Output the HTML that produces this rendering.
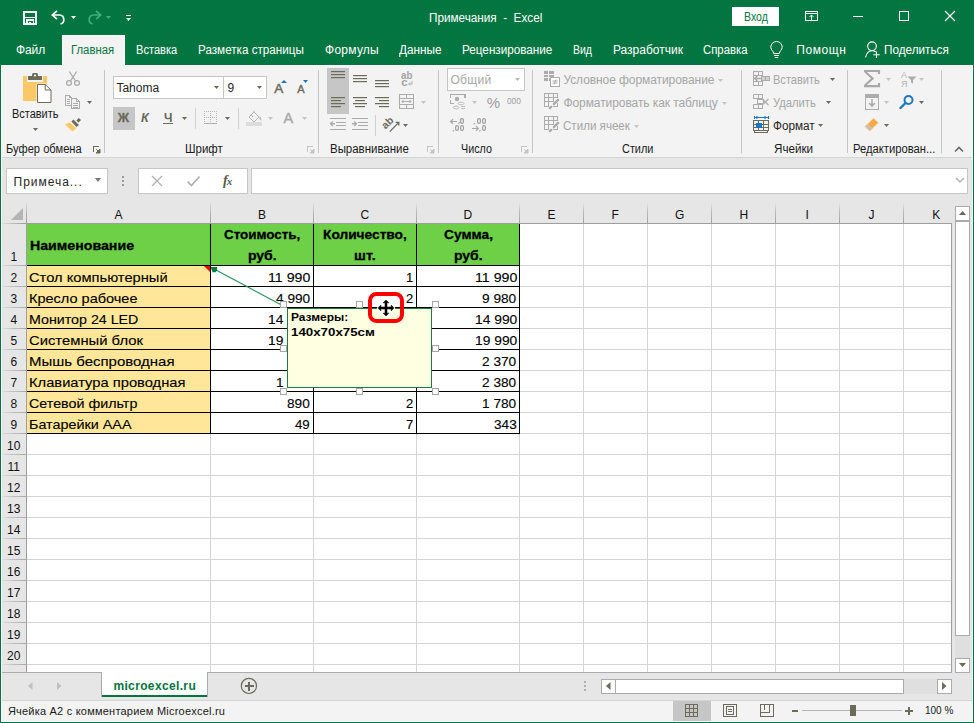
<!DOCTYPE html>
<html><head><meta charset="utf-8"><style>
html,body{margin:0;padding:0;}
body{width:974px;height:723px;overflow:hidden;position:relative;background:#fff;font-family:'Liberation Sans',sans-serif;}
.a{position:absolute;}
.t{position:absolute;white-space:pre;line-height:20px;}
svg{shape-rendering:crispEdges;}
svg .s{shape-rendering:geometricPrecision;}
</style></head><body>
<div class="a" style="left:0px;top:0px;width:974px;height:65px;background:#037541;"></div>
<div class="a" style="left:62px;top:35px;width:63px;height:30px;background:#f3f3f3;"></div>
<div class="a" style="left:62px;top:35px;width:1px;height:30px;background:#fdfbfd;"></div>
<div class="a" style="left:124px;top:35px;width:1px;height:30px;background:#fdfbfd;"></div>
<div class="a" style="left:62px;top:35px;width:63px;height:1px;background:#fdfbfd;"></div>
<div class="a" style="left:0px;top:65px;width:974px;height:92px;background:#f3f3f3;"></div>
<div class="a" style="left:0px;top:157px;width:974px;height:1px;background:#d4d4d4;"></div>
<div class="a" style="left:1px;top:65px;width:61px;height:1px;background:#fdfbfd;"></div>
<div class="a" style="left:125px;top:65px;width:848px;height:1px;background:#fdfbfd;"></div>
<div class="a" style="left:0px;top:158px;width:974px;height:66px;background:#e6e6e6;"></div>
<div class="a" style="left:0px;top:224px;width:27px;height:448px;background:#e6e6e6;"></div>
<div class="a" style="left:27px;top:224px;width:925px;height:448px;background:#ffffff;"></div>
<div class="a" style="left:952px;top:203px;width:20px;height:469px;background:#e6e6e6;"></div>
<div class="a" style="left:0px;top:672px;width:974px;height:28px;background:#e6e6e6;"></div>
<div class="a" style="left:0px;top:700px;width:974px;height:22px;background:#f3f3f3;"></div>
<div class="t" style="left:429.30px;top:8px;font-family:'Liberation Sans';font-size:12px;font-weight:normal;color:#fff;letter-spacing:0.000px;transform:scaleX(0.9767);transform-origin:0 0;">Примечания  -  Excel</div>
<div class="a" style="left:732px;top:7px;width:47px;height:19px;background:#fff;"></div>
<div class="t" style="left:743.50px;top:7px;font-family:'Liberation Sans';font-size:12px;font-weight:normal;color:#037541;letter-spacing:0.000px;transform:scaleX(0.8821);transform-origin:0 0;">Вход</div>
<div class="t" style="left:15.90px;top:40px;font-family:'Liberation Sans';font-size:12px;font-weight:normal;color:#fff;letter-spacing:-0.067px;">Файл</div>
<div class="t" style="left:71.10px;top:40px;font-family:'Liberation Sans';font-size:12px;font-weight:normal;color:#037541;letter-spacing:0.000px;transform:scaleX(0.9435);transform-origin:0 0;">Главная</div>
<div class="t" style="left:136.20px;top:40px;font-family:'Liberation Sans';font-size:12px;font-weight:normal;color:#fff;letter-spacing:0.000px;transform:scaleX(0.9244);transform-origin:0 0;">Вставка</div>
<div class="t" style="left:198.20px;top:40px;font-family:'Liberation Sans';font-size:12px;font-weight:normal;color:#fff;letter-spacing:0.000px;transform:scaleX(0.9725);transform-origin:0 0;">Разметка страницы</div>
<div class="t" style="left:325.10px;top:40px;font-family:'Liberation Sans';font-size:12px;font-weight:normal;color:#fff;letter-spacing:0.233px;">Формулы</div>
<div class="t" style="left:398.80px;top:40px;font-family:'Liberation Sans';font-size:12px;font-weight:normal;color:#fff;letter-spacing:0.000px;transform:scaleX(0.9818);transform-origin:0 0;">Данные</div>
<div class="t" style="left:462.30px;top:40px;font-family:'Liberation Sans';font-size:12px;font-weight:normal;color:#fff;letter-spacing:0.000px;transform:scaleX(0.9753);transform-origin:0 0;">Рецензирование</div>
<div class="t" style="left:573.30px;top:40px;font-family:'Liberation Sans';font-size:12px;font-weight:normal;color:#fff;letter-spacing:0.000px;transform:scaleX(0.8727);transform-origin:0 0;">Вид</div>
<div class="t" style="left:613.00px;top:40px;font-family:'Liberation Sans';font-size:12px;font-weight:normal;color:#fff;letter-spacing:-0.010px;">Разработчик</div>
<div class="t" style="left:703.10px;top:40px;font-family:'Liberation Sans';font-size:12px;font-weight:normal;color:#fff;letter-spacing:0.000px;transform:scaleX(0.9458);transform-origin:0 0;">Справка</div>
<div class="t" style="left:796.30px;top:40px;font-family:'Liberation Sans';font-size:12px;font-weight:normal;color:#fff;letter-spacing:0.580px;">Помощн</div>
<div class="t" style="left:884.30px;top:40px;font-family:'Liberation Sans';font-size:12px;font-weight:normal;color:#fff;letter-spacing:0.000px;transform:scaleX(0.9773);transform-origin:0 0;">Поделиться</div>
<div class="t" style="left:6.20px;top:139px;font-family:'Liberation Sans';font-size:12px;font-weight:normal;color:#1a1a1a;letter-spacing:0.000px;transform:scaleX(0.9280);transform-origin:0 0;">Буфер обмена</div>
<div class="t" style="left:184.70px;top:139px;font-family:'Liberation Sans';font-size:12px;font-weight:normal;color:#1a1a1a;letter-spacing:0.000px;transform:scaleX(0.9575);transform-origin:0 0;">Шрифт</div>
<div class="t" style="left:330.00px;top:139px;font-family:'Liberation Sans';font-size:12px;font-weight:normal;color:#1a1a1a;letter-spacing:0.000px;transform:scaleX(0.9542);transform-origin:0 0;">Выравнивание</div>
<div class="t" style="left:461.00px;top:139px;font-family:'Liberation Sans';font-size:12px;font-weight:normal;color:#1a1a1a;letter-spacing:0.000px;transform:scaleX(0.8943);transform-origin:0 0;">Число</div>
<div class="t" style="left:621.50px;top:139px;font-family:'Liberation Sans';font-size:12px;font-weight:normal;color:#1a1a1a;letter-spacing:0.000px;transform:scaleX(0.9088);transform-origin:0 0;">Стили</div>
<div class="t" style="left:774.40px;top:139px;font-family:'Liberation Sans';font-size:12px;font-weight:normal;color:#1a1a1a;letter-spacing:0.000px;transform:scaleX(0.9725);transform-origin:0 0;">Ячейки</div>
<div class="t" style="left:852.70px;top:139px;font-family:'Liberation Sans';font-size:12px;font-weight:normal;color:#1a1a1a;letter-spacing:0.000px;transform:scaleX(0.9352);transform-origin:0 0;">Редактирован...</div>
<div class="a" style="left:104px;top:70px;width:1px;height:83px;background:#c6c6c6;"></div>
<div class="a" style="left:318px;top:70px;width:1px;height:83px;background:#c6c6c6;"></div>
<div class="a" style="left:438px;top:70px;width:1px;height:83px;background:#c6c6c6;"></div>
<div class="a" style="left:532px;top:70px;width:1px;height:83px;background:#c6c6c6;"></div>
<div class="a" style="left:741px;top:70px;width:1px;height:83px;background:#c6c6c6;"></div>
<div class="a" style="left:847px;top:70px;width:1px;height:83px;background:#c6c6c6;"></div>
<div class="a" style="left:941px;top:70px;width:1px;height:83px;background:#c6c6c6;"></div>
<div class="a" style="left:6px;top:168px;width:102px;height:26px;background:#fff;box-sizing:border-box;border:1px solid #c6c6c6;"></div>
<div class="t" style="left:13.60px;top:172px;font-family:'Liberation Sans';font-size:12px;font-weight:normal;color:#262626;letter-spacing:0.967px;">Примеча...</div>
<div class="a" style="left:138px;top:168px;width:110px;height:26px;background:#fff;box-sizing:border-box;border:1px solid #c6c6c6;"></div>
<div class="a" style="left:251px;top:168px;width:717px;height:26px;background:#fff;box-sizing:border-box;border:1px solid #c6c6c6;"></div>
<div class="t" style="left:114.50px;top:205px;font-family:'Liberation Sans';font-size:12px;font-weight:normal;color:#111;letter-spacing:0.000px;">A</div>
<div class="t" style="left:258.00px;top:205px;font-family:'Liberation Sans';font-size:12px;font-weight:normal;color:#111;letter-spacing:0.000px;">B</div>
<div class="t" style="left:360.50px;top:205px;font-family:'Liberation Sans';font-size:12px;font-weight:normal;color:#111;letter-spacing:0.000px;">C</div>
<div class="t" style="left:463.50px;top:205px;font-family:'Liberation Sans';font-size:12px;font-weight:normal;color:#111;letter-spacing:0.000px;">D</div>
<div class="t" style="left:547.50px;top:205px;font-family:'Liberation Sans';font-size:12px;font-weight:normal;color:#111;letter-spacing:0.000px;">E</div>
<div class="t" style="left:611.50px;top:205px;font-family:'Liberation Sans';font-size:12px;font-weight:normal;color:#111;letter-spacing:0.000px;">F</div>
<div class="t" style="left:675.00px;top:205px;font-family:'Liberation Sans';font-size:12px;font-weight:normal;color:#111;letter-spacing:0.000px;">G</div>
<div class="t" style="left:739.50px;top:205px;font-family:'Liberation Sans';font-size:12px;font-weight:normal;color:#111;letter-spacing:0.000px;">H</div>
<div class="t" style="left:805.50px;top:205px;font-family:'Liberation Sans';font-size:12px;font-weight:normal;color:#111;letter-spacing:0.000px;">I</div>
<div class="t" style="left:868.50px;top:205px;font-family:'Liberation Sans';font-size:12px;font-weight:normal;color:#111;letter-spacing:0.000px;">J</div>
<div class="t" style="left:932.30px;top:205px;font-family:'Liberation Sans';font-size:12px;font-weight:normal;color:#111;letter-spacing:0.000px;">K</div>
<div class="a" style="left:210px;top:203px;width:1px;height:20px;background:linear-gradient(to bottom,#e2e2e2,#b8b8b8 45%,#a4a4a4);"></div>
<div class="a" style="left:313px;top:203px;width:1px;height:20px;background:linear-gradient(to bottom,#e2e2e2,#b8b8b8 45%,#a4a4a4);"></div>
<div class="a" style="left:416px;top:203px;width:1px;height:20px;background:linear-gradient(to bottom,#e2e2e2,#b8b8b8 45%,#a4a4a4);"></div>
<div class="a" style="left:519px;top:203px;width:1px;height:20px;background:linear-gradient(to bottom,#e2e2e2,#b8b8b8 45%,#a4a4a4);"></div>
<div class="a" style="left:583px;top:203px;width:1px;height:20px;background:linear-gradient(to bottom,#e2e2e2,#b8b8b8 45%,#a4a4a4);"></div>
<div class="a" style="left:647px;top:203px;width:1px;height:20px;background:linear-gradient(to bottom,#e2e2e2,#b8b8b8 45%,#a4a4a4);"></div>
<div class="a" style="left:711px;top:203px;width:1px;height:20px;background:linear-gradient(to bottom,#e2e2e2,#b8b8b8 45%,#a4a4a4);"></div>
<div class="a" style="left:775px;top:203px;width:1px;height:20px;background:linear-gradient(to bottom,#e2e2e2,#b8b8b8 45%,#a4a4a4);"></div>
<div class="a" style="left:839px;top:203px;width:1px;height:20px;background:linear-gradient(to bottom,#e2e2e2,#b8b8b8 45%,#a4a4a4);"></div>
<div class="a" style="left:903px;top:203px;width:1px;height:20px;background:linear-gradient(to bottom,#e2e2e2,#b8b8b8 45%,#a4a4a4);"></div>
<div class="a" style="left:26px;top:203px;width:1px;height:20px;background:linear-gradient(to bottom,#e2e2e2,#b8b8b8 45%,#9a9a9a);"></div>
<div class="a" style="left:27px;top:223px;width:925px;height:1px;background:#9e9e9e;"></div>
<div class="a" style="left:1px;top:223px;width:26px;height:1px;background:linear-gradient(to right,#e2e2e2,#c0c0c0 40%,#9a9a9a);"></div>
<div class="a" style="left:26px;top:223px;width:1px;height:449px;background:#9e9e9e;"></div>
<div class="t" style="left:10.50px;top:247px;font-family:'Liberation Sans';font-size:12px;font-weight:normal;color:#111;letter-spacing:0.000px;">1</div>
<div class="a" style="left:1px;top:265px;width:25px;height:1px;background:linear-gradient(to right,#e2e2e2,#c4c4c4 40%,#a8a8a8);"></div>
<div class="t" style="left:10.50px;top:268px;font-family:'Liberation Sans';font-size:12px;font-weight:normal;color:#111;letter-spacing:0.000px;">2</div>
<div class="a" style="left:1px;top:286px;width:25px;height:1px;background:linear-gradient(to right,#e2e2e2,#c4c4c4 40%,#a8a8a8);"></div>
<div class="t" style="left:10.50px;top:289px;font-family:'Liberation Sans';font-size:12px;font-weight:normal;color:#111;letter-spacing:0.000px;">3</div>
<div class="a" style="left:1px;top:307px;width:25px;height:1px;background:linear-gradient(to right,#e2e2e2,#c4c4c4 40%,#a8a8a8);"></div>
<div class="t" style="left:10.50px;top:310px;font-family:'Liberation Sans';font-size:12px;font-weight:normal;color:#111;letter-spacing:0.000px;">4</div>
<div class="a" style="left:1px;top:328px;width:25px;height:1px;background:linear-gradient(to right,#e2e2e2,#c4c4c4 40%,#a8a8a8);"></div>
<div class="t" style="left:10.50px;top:331px;font-family:'Liberation Sans';font-size:12px;font-weight:normal;color:#111;letter-spacing:0.000px;">5</div>
<div class="a" style="left:1px;top:349px;width:25px;height:1px;background:linear-gradient(to right,#e2e2e2,#c4c4c4 40%,#a8a8a8);"></div>
<div class="t" style="left:10.50px;top:352px;font-family:'Liberation Sans';font-size:12px;font-weight:normal;color:#111;letter-spacing:0.000px;">6</div>
<div class="a" style="left:1px;top:370px;width:25px;height:1px;background:linear-gradient(to right,#e2e2e2,#c4c4c4 40%,#a8a8a8);"></div>
<div class="t" style="left:10.50px;top:373px;font-family:'Liberation Sans';font-size:12px;font-weight:normal;color:#111;letter-spacing:0.000px;">7</div>
<div class="a" style="left:1px;top:391px;width:25px;height:1px;background:linear-gradient(to right,#e2e2e2,#c4c4c4 40%,#a8a8a8);"></div>
<div class="t" style="left:10.50px;top:394px;font-family:'Liberation Sans';font-size:12px;font-weight:normal;color:#111;letter-spacing:0.000px;">8</div>
<div class="a" style="left:1px;top:412px;width:25px;height:1px;background:linear-gradient(to right,#e2e2e2,#c4c4c4 40%,#a8a8a8);"></div>
<div class="t" style="left:10.50px;top:415px;font-family:'Liberation Sans';font-size:12px;font-weight:normal;color:#111;letter-spacing:0.000px;">9</div>
<div class="a" style="left:1px;top:433px;width:25px;height:1px;background:linear-gradient(to right,#e2e2e2,#c4c4c4 40%,#a8a8a8);"></div>
<div class="t" style="left:7.00px;top:436px;font-family:'Liberation Sans';font-size:12px;font-weight:normal;color:#111;letter-spacing:0.000px;">10</div>
<div class="a" style="left:1px;top:454px;width:25px;height:1px;background:linear-gradient(to right,#e2e2e2,#c4c4c4 40%,#a8a8a8);"></div>
<div class="t" style="left:7.50px;top:457px;font-family:'Liberation Sans';font-size:12px;font-weight:normal;color:#111;letter-spacing:0.000px;">11</div>
<div class="a" style="left:1px;top:475px;width:25px;height:1px;background:linear-gradient(to right,#e2e2e2,#c4c4c4 40%,#a8a8a8);"></div>
<div class="t" style="left:7.00px;top:478px;font-family:'Liberation Sans';font-size:12px;font-weight:normal;color:#111;letter-spacing:0.000px;">12</div>
<div class="a" style="left:1px;top:496px;width:25px;height:1px;background:linear-gradient(to right,#e2e2e2,#c4c4c4 40%,#a8a8a8);"></div>
<div class="t" style="left:7.00px;top:499px;font-family:'Liberation Sans';font-size:12px;font-weight:normal;color:#111;letter-spacing:0.000px;">13</div>
<div class="a" style="left:1px;top:517px;width:25px;height:1px;background:linear-gradient(to right,#e2e2e2,#c4c4c4 40%,#a8a8a8);"></div>
<div class="t" style="left:7.00px;top:520px;font-family:'Liberation Sans';font-size:12px;font-weight:normal;color:#111;letter-spacing:0.000px;">14</div>
<div class="a" style="left:1px;top:538px;width:25px;height:1px;background:linear-gradient(to right,#e2e2e2,#c4c4c4 40%,#a8a8a8);"></div>
<div class="t" style="left:7.00px;top:541px;font-family:'Liberation Sans';font-size:12px;font-weight:normal;color:#111;letter-spacing:0.000px;">15</div>
<div class="a" style="left:1px;top:559px;width:25px;height:1px;background:linear-gradient(to right,#e2e2e2,#c4c4c4 40%,#a8a8a8);"></div>
<div class="t" style="left:7.00px;top:562px;font-family:'Liberation Sans';font-size:12px;font-weight:normal;color:#111;letter-spacing:0.000px;">16</div>
<div class="a" style="left:1px;top:580px;width:25px;height:1px;background:linear-gradient(to right,#e2e2e2,#c4c4c4 40%,#a8a8a8);"></div>
<div class="t" style="left:7.00px;top:583px;font-family:'Liberation Sans';font-size:12px;font-weight:normal;color:#111;letter-spacing:0.000px;">17</div>
<div class="a" style="left:1px;top:601px;width:25px;height:1px;background:linear-gradient(to right,#e2e2e2,#c4c4c4 40%,#a8a8a8);"></div>
<div class="t" style="left:7.00px;top:604px;font-family:'Liberation Sans';font-size:12px;font-weight:normal;color:#111;letter-spacing:0.000px;">18</div>
<div class="a" style="left:1px;top:622px;width:25px;height:1px;background:linear-gradient(to right,#e2e2e2,#c4c4c4 40%,#a8a8a8);"></div>
<div class="t" style="left:7.00px;top:625px;font-family:'Liberation Sans';font-size:12px;font-weight:normal;color:#111;letter-spacing:0.000px;">19</div>
<div class="a" style="left:1px;top:643px;width:25px;height:1px;background:linear-gradient(to right,#e2e2e2,#c4c4c4 40%,#a8a8a8);"></div>
<div class="t" style="left:7.00px;top:646px;font-family:'Liberation Sans';font-size:12px;font-weight:normal;color:#111;letter-spacing:0.000px;">20</div>
<div class="a" style="left:1px;top:664px;width:25px;height:1px;background:linear-gradient(to right,#e2e2e2,#c4c4c4 40%,#a8a8a8);"></div>
<div class="a" style="left:210px;top:224px;width:1px;height:448px;background:#d4d4d4;"></div>
<div class="a" style="left:313px;top:224px;width:1px;height:448px;background:#d4d4d4;"></div>
<div class="a" style="left:416px;top:224px;width:1px;height:448px;background:#d4d4d4;"></div>
<div class="a" style="left:519px;top:224px;width:1px;height:448px;background:#d4d4d4;"></div>
<div class="a" style="left:583px;top:224px;width:1px;height:448px;background:#d4d4d4;"></div>
<div class="a" style="left:647px;top:224px;width:1px;height:448px;background:#d4d4d4;"></div>
<div class="a" style="left:711px;top:224px;width:1px;height:448px;background:#d4d4d4;"></div>
<div class="a" style="left:775px;top:224px;width:1px;height:448px;background:#d4d4d4;"></div>
<div class="a" style="left:839px;top:224px;width:1px;height:448px;background:#d4d4d4;"></div>
<div class="a" style="left:903px;top:224px;width:1px;height:448px;background:#d4d4d4;"></div>
<div class="a" style="left:27px;top:265px;width:924px;height:1px;background:#d4d4d4;"></div>
<div class="a" style="left:27px;top:286px;width:924px;height:1px;background:#d4d4d4;"></div>
<div class="a" style="left:27px;top:307px;width:924px;height:1px;background:#d4d4d4;"></div>
<div class="a" style="left:27px;top:328px;width:924px;height:1px;background:#d4d4d4;"></div>
<div class="a" style="left:27px;top:349px;width:924px;height:1px;background:#d4d4d4;"></div>
<div class="a" style="left:27px;top:370px;width:924px;height:1px;background:#d4d4d4;"></div>
<div class="a" style="left:27px;top:391px;width:924px;height:1px;background:#d4d4d4;"></div>
<div class="a" style="left:27px;top:412px;width:924px;height:1px;background:#d4d4d4;"></div>
<div class="a" style="left:27px;top:433px;width:924px;height:1px;background:#d4d4d4;"></div>
<div class="a" style="left:27px;top:454px;width:924px;height:1px;background:#d4d4d4;"></div>
<div class="a" style="left:27px;top:475px;width:924px;height:1px;background:#d4d4d4;"></div>
<div class="a" style="left:27px;top:496px;width:924px;height:1px;background:#d4d4d4;"></div>
<div class="a" style="left:27px;top:517px;width:924px;height:1px;background:#d4d4d4;"></div>
<div class="a" style="left:27px;top:538px;width:924px;height:1px;background:#d4d4d4;"></div>
<div class="a" style="left:27px;top:559px;width:924px;height:1px;background:#d4d4d4;"></div>
<div class="a" style="left:27px;top:580px;width:924px;height:1px;background:#d4d4d4;"></div>
<div class="a" style="left:27px;top:601px;width:924px;height:1px;background:#d4d4d4;"></div>
<div class="a" style="left:27px;top:622px;width:924px;height:1px;background:#d4d4d4;"></div>
<div class="a" style="left:27px;top:643px;width:924px;height:1px;background:#d4d4d4;"></div>
<div class="a" style="left:27px;top:664px;width:924px;height:1px;background:#d4d4d4;"></div>
<div class="a" style="left:951px;top:223px;width:1px;height:449px;background:#a0a0a0;"></div>
<div class="a" style="left:27px;top:224px;width:492px;height:41px;background:#6dd046;"></div>
<div class="a" style="left:27px;top:266px;width:183px;height:20px;background:#ffe699;"></div>
<div class="a" style="left:27px;top:287px;width:183px;height:20px;background:#ffe699;"></div>
<div class="a" style="left:27px;top:308px;width:183px;height:20px;background:#ffe699;"></div>
<div class="a" style="left:27px;top:329px;width:183px;height:20px;background:#ffe699;"></div>
<div class="a" style="left:27px;top:350px;width:183px;height:20px;background:#ffe699;"></div>
<div class="a" style="left:27px;top:371px;width:183px;height:20px;background:#ffe699;"></div>
<div class="a" style="left:27px;top:392px;width:183px;height:20px;background:#ffe699;"></div>
<div class="a" style="left:27px;top:413px;width:183px;height:20px;background:#ffe699;"></div>
<div class="a" style="left:210px;top:224px;width:1px;height:210px;background:#000;"></div>
<div class="a" style="left:313px;top:224px;width:1px;height:210px;background:#000;"></div>
<div class="a" style="left:416px;top:224px;width:1px;height:210px;background:#000;"></div>
<div class="a" style="left:519px;top:224px;width:1px;height:210px;background:#000;"></div>
<div class="a" style="left:27px;top:265px;width:493px;height:1px;background:#000;"></div>
<div class="a" style="left:27px;top:286px;width:493px;height:1px;background:#000;"></div>
<div class="a" style="left:27px;top:307px;width:493px;height:1px;background:#000;"></div>
<div class="a" style="left:27px;top:328px;width:493px;height:1px;background:#000;"></div>
<div class="a" style="left:27px;top:349px;width:493px;height:1px;background:#000;"></div>
<div class="a" style="left:27px;top:370px;width:493px;height:1px;background:#000;"></div>
<div class="a" style="left:27px;top:391px;width:493px;height:1px;background:#000;"></div>
<div class="a" style="left:27px;top:412px;width:493px;height:1px;background:#000;"></div>
<div class="a" style="left:27px;top:433px;width:493px;height:1px;background:#000;"></div>
<div class="t" style="left:29.90px;top:236px;font-family:'Liberation Sans';font-size:13px;font-weight:bold;-webkit-text-stroke:0.3px #000;color:#000;letter-spacing:0.000px;transform:scaleX(1.0906);transform-origin:0 0;">Наименование</div>
<div class="t" style="left:223.50px;top:225px;font-family:'Liberation Sans';font-size:13px;font-weight:bold;-webkit-text-stroke:0.3px #000;color:#000;letter-spacing:0.000px;transform:scaleX(1.0324);transform-origin:0 0;">Стоимость,</div>
<div class="t" style="left:247.60px;top:246px;font-family:'Liberation Sans';font-size:13px;font-weight:bold;-webkit-text-stroke:0.3px #000;color:#000;letter-spacing:0.000px;transform:scaleX(1.0741);transform-origin:0 0;">руб.</div>
<div class="t" style="left:322.60px;top:225px;font-family:'Liberation Sans';font-size:13px;font-weight:bold;-webkit-text-stroke:0.3px #000;color:#000;letter-spacing:0.000px;transform:scaleX(1.0557);transform-origin:0 0;">Количество,</div>
<div class="t" style="left:353.80px;top:246px;font-family:'Liberation Sans';font-size:13px;font-weight:bold;-webkit-text-stroke:0.3px #000;color:#000;letter-spacing:0.000px;transform:scaleX(1.1000);transform-origin:0 0;">шт.</div>
<div class="t" style="left:443.80px;top:225px;font-family:'Liberation Sans';font-size:13px;font-weight:bold;-webkit-text-stroke:0.3px #000;color:#000;letter-spacing:0.000px;transform:scaleX(1.0565);transform-origin:0 0;">Сумма,</div>
<div class="t" style="left:453.60px;top:246px;font-family:'Liberation Sans';font-size:13px;font-weight:bold;-webkit-text-stroke:0.3px #000;color:#000;letter-spacing:0.000px;transform:scaleX(1.0741);transform-origin:0 0;">руб.</div>
<div class="t" style="left:28.90px;top:268px;font-family:'Liberation Sans';font-size:13px;font-weight:normal;-webkit-text-stroke:0.12px #000;color:#000;letter-spacing:0.000px;transform:scaleX(1.1301);transform-origin:0 0;">Стол компьютерный</div>
<div class="t" style="left:28.90px;top:289px;font-family:'Liberation Sans';font-size:13px;font-weight:normal;-webkit-text-stroke:0.12px #000;color:#000;letter-spacing:0.000px;transform:scaleX(1.1165);transform-origin:0 0;">Кресло рабочее</div>
<div class="t" style="left:28.90px;top:310px;font-family:'Liberation Sans';font-size:13px;font-weight:normal;-webkit-text-stroke:0.12px #000;color:#000;letter-spacing:0.000px;transform:scaleX(1.0950);transform-origin:0 0;">Монитор 24 LED</div>
<div class="t" style="left:28.90px;top:331px;font-family:'Liberation Sans';font-size:13px;font-weight:normal;-webkit-text-stroke:0.12px #000;color:#000;letter-spacing:0.000px;transform:scaleX(1.1386);transform-origin:0 0;">Системный блок</div>
<div class="t" style="left:28.90px;top:352px;font-family:'Liberation Sans';font-size:13px;font-weight:normal;-webkit-text-stroke:0.12px #000;color:#000;letter-spacing:0.000px;transform:scaleX(1.1524);transform-origin:0 0;">Мышь беспроводная</div>
<div class="t" style="left:28.90px;top:373px;font-family:'Liberation Sans';font-size:13px;font-weight:normal;-webkit-text-stroke:0.12px #000;color:#000;letter-spacing:0.000px;transform:scaleX(1.1312);transform-origin:0 0;">Клавиатура проводная</div>
<div class="t" style="left:28.90px;top:394px;font-family:'Liberation Sans';font-size:13px;font-weight:normal;-webkit-text-stroke:0.12px #000;color:#000;letter-spacing:0.000px;transform:scaleX(1.0990);transform-origin:0 0;">Сетевой фильтр</div>
<div class="t" style="left:28.90px;top:415px;font-family:'Liberation Sans';font-size:13px;font-weight:normal;-webkit-text-stroke:0.12px #000;color:#000;letter-spacing:0.000px;transform:scaleX(1.1043);transform-origin:0 0;">Батарейки ААА</div>
<div class="t" style="left:268.00px;top:268px;font-family:'Liberation Sans';font-size:13px;font-weight:normal;-webkit-text-stroke:0.12px #000;color:#000;letter-spacing:0.000px;transform:scaleX(1.0897);transform-origin:0 0;">11 990</div>
<div class="t" style="left:406.00px;top:268px;font-family:'Liberation Sans';font-size:13px;font-weight:normal;-webkit-text-stroke:0.12px #000;color:#000;letter-spacing:0.000px;">1</div>
<div class="t" style="left:474.50px;top:268px;font-family:'Liberation Sans';font-size:13px;font-weight:normal;-webkit-text-stroke:0.12px #000;color:#000;letter-spacing:0.000px;transform:scaleX(1.0897);transform-origin:0 0;">11 990</div>
<div class="t" style="left:275.80px;top:289px;font-family:'Liberation Sans';font-size:13px;font-weight:normal;-webkit-text-stroke:0.12px #000;color:#000;letter-spacing:0.000px;transform:scaleX(1.0515);transform-origin:0 0;">4 990</div>
<div class="t" style="left:406.00px;top:289px;font-family:'Liberation Sans';font-size:13px;font-weight:normal;-webkit-text-stroke:0.12px #000;color:#000;letter-spacing:0.000px;">2</div>
<div class="t" style="left:482.30px;top:289px;font-family:'Liberation Sans';font-size:13px;font-weight:normal;-webkit-text-stroke:0.12px #000;color:#000;letter-spacing:0.000px;transform:scaleX(1.0515);transform-origin:0 0;">9 980</div>
<div class="t" style="left:268.00px;top:310px;font-family:'Liberation Sans';font-size:13px;font-weight:normal;-webkit-text-stroke:0.12px #000;color:#000;letter-spacing:0.000px;transform:scaleX(1.0625);transform-origin:0 0;">14 990</div>
<div class="t" style="left:406.00px;top:310px;font-family:'Liberation Sans';font-size:13px;font-weight:normal;-webkit-text-stroke:0.12px #000;color:#000;letter-spacing:0.000px;">1</div>
<div class="t" style="left:474.50px;top:310px;font-family:'Liberation Sans';font-size:13px;font-weight:normal;-webkit-text-stroke:0.12px #000;color:#000;letter-spacing:0.000px;transform:scaleX(1.0625);transform-origin:0 0;">14 990</div>
<div class="t" style="left:268.00px;top:331px;font-family:'Liberation Sans';font-size:13px;font-weight:normal;-webkit-text-stroke:0.12px #000;color:#000;letter-spacing:0.000px;transform:scaleX(1.0625);transform-origin:0 0;">19 990</div>
<div class="t" style="left:406.00px;top:331px;font-family:'Liberation Sans';font-size:13px;font-weight:normal;-webkit-text-stroke:0.12px #000;color:#000;letter-spacing:0.000px;">1</div>
<div class="t" style="left:474.50px;top:331px;font-family:'Liberation Sans';font-size:13px;font-weight:normal;-webkit-text-stroke:0.12px #000;color:#000;letter-spacing:0.000px;transform:scaleX(1.0625);transform-origin:0 0;">19 990</div>
<div class="t" style="left:287.40px;top:352px;font-family:'Liberation Sans';font-size:13px;font-weight:normal;-webkit-text-stroke:0.12px #000;color:#000;letter-spacing:0.000px;transform:scaleX(1.0500);transform-origin:0 0;">790</div>
<div class="t" style="left:406.00px;top:352px;font-family:'Liberation Sans';font-size:13px;font-weight:normal;-webkit-text-stroke:0.12px #000;color:#000;letter-spacing:0.000px;">1</div>
<div class="t" style="left:482.30px;top:352px;font-family:'Liberation Sans';font-size:13px;font-weight:normal;-webkit-text-stroke:0.12px #000;color:#000;letter-spacing:0.000px;transform:scaleX(1.0515);transform-origin:0 0;">2 370</div>
<div class="t" style="left:275.80px;top:373px;font-family:'Liberation Sans';font-size:13px;font-weight:normal;-webkit-text-stroke:0.12px #000;color:#000;letter-spacing:0.000px;transform:scaleX(1.0515);transform-origin:0 0;">1 190</div>
<div class="t" style="left:406.00px;top:373px;font-family:'Liberation Sans';font-size:13px;font-weight:normal;-webkit-text-stroke:0.12px #000;color:#000;letter-spacing:0.000px;">1</div>
<div class="t" style="left:482.30px;top:373px;font-family:'Liberation Sans';font-size:13px;font-weight:normal;-webkit-text-stroke:0.12px #000;color:#000;letter-spacing:0.000px;transform:scaleX(1.0515);transform-origin:0 0;">2 380</div>
<div class="t" style="left:287.40px;top:394px;font-family:'Liberation Sans';font-size:13px;font-weight:normal;-webkit-text-stroke:0.12px #000;color:#000;letter-spacing:0.000px;transform:scaleX(1.0500);transform-origin:0 0;">890</div>
<div class="t" style="left:406.00px;top:394px;font-family:'Liberation Sans';font-size:13px;font-weight:normal;-webkit-text-stroke:0.12px #000;color:#000;letter-spacing:0.000px;">2</div>
<div class="t" style="left:482.30px;top:394px;font-family:'Liberation Sans';font-size:13px;font-weight:normal;-webkit-text-stroke:0.12px #000;color:#000;letter-spacing:0.000px;transform:scaleX(1.0515);transform-origin:0 0;">1 780</div>
<div class="t" style="left:295.20px;top:415px;font-family:'Liberation Sans';font-size:13px;font-weight:normal;-webkit-text-stroke:0.12px #000;color:#000;letter-spacing:0.000px;transform:scaleX(1.0200);transform-origin:0 0;">49</div>
<div class="t" style="left:406.00px;top:415px;font-family:'Liberation Sans';font-size:13px;font-weight:normal;-webkit-text-stroke:0.12px #000;color:#000;letter-spacing:0.000px;">7</div>
<div class="t" style="left:493.90px;top:415px;font-family:'Liberation Sans';font-size:13px;font-weight:normal;-webkit-text-stroke:0.12px #000;color:#000;letter-spacing:0.000px;transform:scaleX(1.0500);transform-origin:0 0;">343</div>
<div class="a" style="left:955px;top:206px;width:15px;height:15px;background:#fff;box-sizing:border-box;border:1px solid #ababab;"></div>
<div class="a" style="left:955px;top:221px;width:15px;height:415px;background:#fff;box-sizing:border-box;border:1px solid #ababab;"></div>
<div class="a" style="left:955px;top:636px;width:15px;height:22px;background:#dfdfdf;"></div>
<div class="a" style="left:955px;top:658px;width:15px;height:15px;background:#fff;box-sizing:border-box;border:1px solid #ababab;"></div>
<div class="a" style="left:0px;top:672px;width:101px;height:1px;background:#ababab;"></div>
<div class="a" style="left:208px;top:672px;width:744px;height:1px;background:#ababab;"></div>
<div class="a" style="left:601px;top:679px;width:15px;height:15px;background:#fff;box-sizing:border-box;border:1px solid #ababab;"></div>
<div class="a" style="left:615px;top:679px;width:289px;height:15px;background:#fff;box-sizing:border-box;border:1px solid #ababab;"></div>
<div class="a" style="left:904px;top:679px;width:33px;height:15px;background:#dfdfdf;"></div>
<div class="a" style="left:937px;top:679px;width:15px;height:15px;background:#fff;box-sizing:border-box;border:1px solid #ababab;"></div>
<div class="a" style="left:101px;top:672px;width:107px;height:25px;background:#fff;box-sizing:border-box;border:solid #ababab;border-width:0 1px 0 1px;"></div>
<div class="a" style="left:102px;top:695px;width:105px;height:2px;background:#037541;"></div>
<div class="t" style="left:113.40px;top:676px;font-family:'Liberation Sans';font-size:12px;font-weight:bold;color:#037541;letter-spacing:0.358px;">microexcel.ru</div>
<div class="a" style="left:0px;top:700px;width:974px;height:1px;background:#d4d4d4;"></div>
<div class="t" style="left:7.90px;top:701px;font-family:'Liberation Sans';font-size:11px;font-weight:normal;color:#1a1a1a;letter-spacing:0.216px;">Ячейка A2 с комментарием Microexcel.ru</div>
<div class="a" style="left:673px;top:701px;width:38px;height:21px;background:#c6c6c6;"></div>
<div class="t" style="left:925.00px;top:700px;font-family:'Liberation Sans';font-size:11.5px;font-weight:normal;color:#1a1a1a;letter-spacing:0.000px;transform:scaleX(0.8697);transform-origin:0 0;">100 %</div>
<div class="a" style="left:0px;top:65px;width:1px;height:658px;background:#037541;"></div>
<div class="a" style="left:1px;top:65px;width:1px;height:657px;background:#fdfbfd;"></div>
<div class="a" style="left:973px;top:65px;width:1px;height:658px;background:#037541;"></div>
<div class="a" style="left:972px;top:65px;width:1px;height:657px;background:#fdfbfd;"></div>
<div class="a" style="left:0px;top:722px;width:974px;height:1px;background:#037541;"></div>
<div class="a" style="left:1px;top:721px;width:972px;height:1px;background:#fdfbfd;"></div>
<svg class="a" style="left:200px;top:255px;z-index:5" width="100" height="60" viewBox="0 0 100 60"><line class="s" x1="15" y1="14.5" x2="82" y2="50.2" stroke="#23925a" stroke-width="1.1"/><path class="s" d="M10.6 12 L17.2 12 L17 15.3 L15.6 17.2 L12.6 17.2 Z" fill="#0a7a3e"/></svg>
<svg class="a" style="left:204px;top:266px;z-index:4;" width="6" height="6" viewBox="0 0 6 6"><path class="s" d="M0 0 H6 V6 Z" fill="#ff0000"/></svg>
<div class="a" style="left:287px;top:308px;width:145px;height:80px;background:#ffffe1;box-sizing:border-box;border:1px solid #1e7b45;z-index:6;"></div>
<div class="t" style="left:291.00px;top:307px;font-family:'Liberation Sans';font-size:11.5px;font-weight:bold;color:#000;letter-spacing:0.000px;z-index:7;transform:scaleX(1.0400);transform-origin:0 0;">Размеры:</div>
<div class="t" style="left:291.00px;top:322px;font-family:'Liberation Sans';font-size:11.5px;font-weight:bold;color:#000;letter-spacing:0.000px;z-index:7;transform:scaleX(1.1569);transform-origin:0 0;">140x70x75см</div>
<div class="a" style="left:280px;top:301px;width:7px;height:7px;background:#fff;box-sizing:border-box;border:1px solid #a6a6a6;z-index:8;"></div>
<div class="a" style="left:280px;top:345px;width:7px;height:7px;background:#fff;box-sizing:border-box;border:1px solid #a6a6a6;z-index:8;"></div>
<div class="a" style="left:280px;top:388px;width:7px;height:7px;background:#fff;box-sizing:border-box;border:1px solid #a6a6a6;z-index:8;"></div>
<div class="a" style="left:356px;top:301px;width:7px;height:7px;background:#fff;box-sizing:border-box;border:1px solid #a6a6a6;z-index:8;"></div>
<div class="a" style="left:356px;top:388px;width:7px;height:7px;background:#fff;box-sizing:border-box;border:1px solid #a6a6a6;z-index:8;"></div>
<div class="a" style="left:432px;top:301px;width:7px;height:7px;background:#fff;box-sizing:border-box;border:1px solid #a6a6a6;z-index:8;"></div>
<div class="a" style="left:432px;top:345px;width:7px;height:7px;background:#fff;box-sizing:border-box;border:1px solid #a6a6a6;z-index:8;"></div>
<div class="a" style="left:432px;top:388px;width:7px;height:7px;background:#fff;box-sizing:border-box;border:1px solid #a6a6a6;z-index:8;"></div>
<svg class="a" style="left:364px;top:288px;z-index:9" width="44" height="40" viewBox="0 0 44 40"><rect class="s" x="6" y="5.9" width="32" height="27.2" rx="6.5" ry="6.5" fill="none" stroke="#ff0000" stroke-width="4"/><path class="s" d="M22.00 12.00 L24.90 14.80 L23.00 14.80 L23.00 19.00 L27.20 19.00 L27.20 17.10 L30.00 20.00 L27.20 22.90 L27.20 21.00 L23.00 21.00 L23.00 25.20 L24.90 25.20 L22.00 28.00 L19.10 25.20 L21.00 25.20 L21.00 21.00 L16.80 21.00 L16.80 22.90 L14.00 20.00 L16.80 17.10 L16.80 19.00 L21.00 19.00 L21.00 14.80 L19.10 14.80 Z" fill="#fff" stroke="#fff" stroke-width="2.4" stroke-linejoin="round"/><path class="s" d="M22.00 12.00 L24.90 14.80 L23.00 14.80 L23.00 19.00 L27.20 19.00 L27.20 17.10 L30.00 20.00 L27.20 22.90 L27.20 21.00 L23.00 21.00 L23.00 25.20 L24.90 25.20 L22.00 28.00 L19.10 25.20 L21.00 25.20 L21.00 21.00 L16.80 21.00 L16.80 22.90 L14.00 20.00 L16.80 17.10 L16.80 19.00 L21.00 19.00 L21.00 14.80 L19.10 14.80 Z" fill="#000" stroke="#000" stroke-width="0.5"/></svg>
<svg class="a" style="left:20px;top:70px;" width="35" height="35" viewBox="0 0 35 35"><rect x="3" y="6" width="24" height="25" rx="1" fill="#fcc865"/><rect x="8" y="6" width="14" height="4" fill="#6b6a5b" stroke="#f3f3f3" stroke-width="1"/><rect x="7.5" y="6" width="15" height="5" fill="none" stroke="#f3f3f3" stroke-width="1"/><rect x="8" y="6" width="14" height="4" fill="#6b6a5b"/><rect class="s" x="12" y="3" width="6" height="4" rx="1.5" fill="#6b6a5b"/><circle class="s" cx="15" cy="5.5" r="1.1" fill="#fff"/><path class="s" d="M16.4 13.5 H25.6 L32 19.5 V33.4 H16.4 Z" fill="#f3f3f3"/><path class="s" d="M17.5 14.5 H25.2 L31 20 V32.5 H17.5 Z" fill="#fff" stroke="#6b6a5b" stroke-width="1"/><path class="s" d="M25.2 14.5 V20 H31" fill="none" stroke="#6b6a5b" stroke-width="1"/></svg>
<div class="t" style="left:11.90px;top:104px;font-family:'Liberation Sans';font-size:12px;font-weight:normal;color:#1a1a1a;letter-spacing:0.000px;transform:scaleX(0.9137);transform-origin:0 0;">Вставить</div>
<svg class="a" style="left:33px;top:128px;" width="5" height="3" viewBox="0 0 5 3"><path class="s" d="M0 0 H5 L2.5 3 Z" fill="#6b6a5b"/></svg>
<svg class="a" style="left:64px;top:70px;" width="18" height="17" viewBox="0 0 18 17"><g class="s" fill="none" stroke="#acacac" stroke-width="1.3"><circle cx="5" cy="13" r="2.4"/><circle cx="13" cy="13" r="2.4"/><path d="M5.3 1.5 L11.5 10.8 M12.7 1.5 L6.5 10.8"/></g></svg>
<svg class="a" style="left:64px;top:94px;" width="18" height="16" viewBox="0 0 18 16"><g fill="none" stroke="#acacac" stroke-width="1"><path d="M1.5 1.5 H5.5 L7.5 3.5 V11.5 H1.5 Z"/><path d="M5.5 1.5 V3.5 H7.5"/><path d="M3 5.5 H6 M3 7.5 H6 M3 9.5 H6"/></g><path d="M7.5 4.5 H12.5 L15.5 7.5 V14.5 H7.5 Z" fill="#f3f3f3" stroke="#acacac" stroke-width="1"/><path d="M12.5 4.5 V7.5 H15.5 M9 9.5 H14 M9 11.5 H14 M9 13.5 H14" fill="none" stroke="#acacac" stroke-width="1"/></svg>
<svg class="a" style="left:87px;top:101px;" width="5" height="3" viewBox="0 0 5 3"><path class="s" d="M0 0 H5 L2.5 3 Z" fill="#6b6a5b"/></svg>
<svg class="a" style="left:64px;top:117px;" width="18" height="16" viewBox="0 0 18 16"><path class="s" d="M1 7.3 L5.8 5.6 L12.3 11.3 L8.5 14.6 Z" fill="#fcc865"/><path class="s" d="M7.4 4.4 L9.4 2.6 L15 7.9 L12.4 9.9 Z" fill="#6b6a5b"/><path class="s" d="M12.3 3.6 L14.8 1 L17 3.1 L14.6 5.6 Z" fill="#6b6a5b"/></svg>
<div class="a" style="left:113px;top:76px;width:111px;height:23px;background:#fff;box-sizing:border-box;border:1px solid #c6c6c6;"></div>
<div class="a" style="left:223px;top:76px;width:44px;height:23px;background:#fff;box-sizing:border-box;border:1px solid #c6c6c6;"></div>
<div class="t" style="left:116.40px;top:78px;font-family:'Liberation Sans';font-size:12px;font-weight:normal;color:#262626;letter-spacing:0.020px;">Tahoma</div>
<svg class="a" style="left:214px;top:86px;" width="5" height="3" viewBox="0 0 5 3"><path class="s" d="M0 0 H5 L2.5 3 Z" fill="#6b6a5b"/></svg>
<div class="t" style="left:227.40px;top:78px;font-family:'Liberation Sans';font-size:12px;font-weight:normal;color:#262626;letter-spacing:0.000px;">9</div>
<svg class="a" style="left:257px;top:86px;" width="5" height="3" viewBox="0 0 5 3"><path class="s" d="M0 0 H5 L2.5 3 Z" fill="#6b6a5b"/></svg>
<div class="t" style="left:274.30px;top:79px;font-family:'Liberation Sans';font-size:13.5px;font-weight:normal;-webkit-text-stroke:0.45px #6b6a5b;color:#6b6a5b;letter-spacing:0.000px;">A</div>
<svg class="a" style="left:281px;top:80px;" width="6" height="3" viewBox="0 0 6 3"><path class="s" d="M0 3 H6 L3.0 0 Z" fill="#1a78c2"/></svg>
<div class="t" style="left:297.20px;top:79px;font-family:'Liberation Sans';font-size:11px;font-weight:normal;-webkit-text-stroke:0.4px #6b6a5b;color:#6b6a5b;letter-spacing:0.000px;">A</div>
<svg class="a" style="left:303px;top:80px;" width="5" height="3" viewBox="0 0 5 3"><path class="s" d="M0 0 H5 L2.5 3 Z" fill="#1a78c2"/></svg>
<div class="a" style="left:113px;top:107px;width:22px;height:23px;background:#c6c6c6;"></div>
<div class="t" style="left:117.70px;top:108px;font-family:'Liberation Sans';font-size:12.5px;font-weight:bold;-webkit-text-stroke:0.3px #6b6a5b;color:#6b6a5b;letter-spacing:0.000px;">Ж</div>
<div class="t" style="left:141.00px;top:108px;font-family:'Liberation Sans';font-size:12.5px;font-weight:bold;font-style:italic;color:#6b6a5b;letter-spacing:0.000px;">К</div>
<div class="t" style="left:164.00px;top:108px;font-family:'Liberation Sans';font-size:12px;font-weight:bold;color:#6b6a5b;letter-spacing:0.000px;">Ч</div>
<div class="a" style="left:163px;top:123px;width:10px;height:1px;background:#6b6a5b;"></div>
<svg class="a" style="left:182px;top:117px;" width="5" height="3" viewBox="0 0 5 3"><path class="s" d="M0 0 H5 L2.5 3 Z" fill="#6b6a5b"/></svg>
<div class="a" style="left:195px;top:108px;width:1px;height:21px;background:#d0d0d0;"></div>
<svg class="a" style="left:203px;top:110px;" width="16" height="16" viewBox="0 0 16 16"><rect x="1" y="1" width="1" height="1" fill="#b8b8b8"/><rect x="3" y="1" width="1" height="1" fill="#b8b8b8"/><rect x="5" y="1" width="1" height="1" fill="#b8b8b8"/><rect x="7" y="1" width="1" height="1" fill="#b8b8b8"/><rect x="9" y="1" width="1" height="1" fill="#b8b8b8"/><rect x="11" y="1" width="1" height="1" fill="#b8b8b8"/><rect x="13" y="1" width="1" height="1" fill="#b8b8b8"/><rect x="1" y="3" width="1" height="1" fill="#b8b8b8"/><rect x="7" y="3" width="1" height="1" fill="#b8b8b8"/><rect x="13" y="3" width="1" height="1" fill="#b8b8b8"/><rect x="1" y="5" width="1" height="1" fill="#b8b8b8"/><rect x="7" y="5" width="1" height="1" fill="#b8b8b8"/><rect x="13" y="5" width="1" height="1" fill="#b8b8b8"/><rect x="1" y="7" width="1" height="1" fill="#b8b8b8"/><rect x="3" y="7" width="1" height="1" fill="#b8b8b8"/><rect x="5" y="7" width="1" height="1" fill="#b8b8b8"/><rect x="7" y="7" width="1" height="1" fill="#b8b8b8"/><rect x="9" y="7" width="1" height="1" fill="#b8b8b8"/><rect x="11" y="7" width="1" height="1" fill="#b8b8b8"/><rect x="13" y="7" width="1" height="1" fill="#b8b8b8"/><rect x="1" y="9" width="1" height="1" fill="#b8b8b8"/><rect x="7" y="9" width="1" height="1" fill="#b8b8b8"/><rect x="13" y="9" width="1" height="1" fill="#b8b8b8"/><rect x="1" y="11" width="1" height="1" fill="#b8b8b8"/><rect x="7" y="11" width="1" height="1" fill="#b8b8b8"/><rect x="13" y="11" width="1" height="1" fill="#b8b8b8"/><rect x="1" y="13" width="13" height="1" fill="#b0b0b0"/></svg>
<svg class="a" style="left:225px;top:117px;" width="5" height="3" viewBox="0 0 5 3"><path class="s" d="M0 0 H5 L2.5 3 Z" fill="#6b6a5b"/></svg>
<div class="a" style="left:238px;top:108px;width:1px;height:21px;background:#d0d0d0;"></div>
<svg class="a" style="left:246px;top:109px;" width="18" height="18" viewBox="0 0 18 18"><g class="s" fill="none" stroke="#b4b4b4" stroke-width="1"><path d="M3 8 L8 3 L13 8 L8 13 Z"/><path d="M8 3 V1.5 M5 5.5 L7 8"/></g><path class="s" d="M13.5 7 Q16 9 15.5 12 L13.5 10 Z" fill="#b4b4b4"/><rect x="0" y="13" width="16" height="4" fill="#dcdcdc"/></svg>
<svg class="a" style="left:268px;top:117px;" width="5" height="3" viewBox="0 0 5 3"><path class="s" d="M0 0 H5 L2.5 3 Z" fill="#c4c4c4"/></svg>
<div class="t" style="left:283.50px;top:108px;font-family:'Liberation Sans';font-size:14.5px;font-weight:normal;-webkit-text-stroke:0.4px #a8a8a8;color:#a8a8a8;letter-spacing:0.000px;">A</div>
<svg class="a" style="left:302px;top:117px;" width="5" height="3" viewBox="0 0 5 3"><path class="s" d="M0 0 H5 L2.5 3 Z" fill="#c4c4c4"/></svg>
<div class="a" style="left:327px;top:68px;width:22px;height:46px;background:#c6c6c6;"></div>
<svg class="a" style="left:331px;top:70px;shape-rendering:auto;" width="20" height="20" viewBox="0 0 20 20"><rect x="0" y="1" width="14" height="1.2" fill="#6b6a5b"/><rect x="0" y="4" width="14" height="1.2" fill="#6b6a5b"/><rect x="0" y="7" width="14" height="1.2" fill="#6b6a5b"/></svg>
<svg class="a" style="left:353px;top:75px;shape-rendering:auto;" width="20" height="20" viewBox="0 0 20 20"><rect x="0" y="0" width="14" height="1.2" fill="#6b6a5b"/><rect x="0" y="3" width="14" height="1.2" fill="#6b6a5b"/><rect x="0" y="6" width="14" height="1.2" fill="#6b6a5b"/></svg>
<svg class="a" style="left:375px;top:80px;shape-rendering:auto;" width="20" height="20" viewBox="0 0 20 20"><rect x="0" y="0" width="14" height="1.2" fill="#6b6a5b"/><rect x="0" y="3" width="14" height="1.2" fill="#6b6a5b"/><rect x="0" y="6" width="14" height="1.2" fill="#6b6a5b"/></svg>
<svg class="a" style="left:331px;top:97px;shape-rendering:auto;" width="20" height="20" viewBox="0 0 20 20"><rect x="0" y="0" width="14" height="1.2" fill="#6b6a5b"/><rect x="0" y="3" width="10" height="1.2" fill="#6b6a5b"/><rect x="0" y="6" width="14" height="1.2" fill="#6b6a5b"/><rect x="0" y="9" width="10" height="1.2" fill="#6b6a5b"/></svg>
<svg class="a" style="left:353px;top:97px;shape-rendering:auto;" width="20" height="20" viewBox="0 0 20 20"><rect x="0" y="0" width="14" height="1.2" fill="#6b6a5b"/><rect x="2" y="3" width="10" height="1.2" fill="#6b6a5b"/><rect x="0" y="6" width="14" height="1.2" fill="#6b6a5b"/><rect x="2" y="9" width="10" height="1.2" fill="#6b6a5b"/></svg>
<svg class="a" style="left:375px;top:97px;shape-rendering:auto;" width="20" height="20" viewBox="0 0 20 20"><rect x="0" y="0" width="14" height="1.2" fill="#6b6a5b"/><rect x="4" y="3" width="10" height="1.2" fill="#6b6a5b"/><rect x="0" y="6" width="14" height="1.2" fill="#6b6a5b"/><rect x="4" y="9" width="10" height="1.2" fill="#6b6a5b"/></svg>
<div class="t" style="left:401.00px;top:65px;font-family:'Liberation Sans';font-size:11px;font-weight:bold;color:#a4a4a4;letter-spacing:0.000px;transform:scaleX(0.8923);transform-origin:0 0;">ab</div>
<div class="t" style="left:401.30px;top:72px;font-family:'Liberation Sans';font-size:11.5px;font-weight:bold;color:#a4a4a4;letter-spacing:0.000px;">c</div>
<svg class="a" style="left:407px;top:80px;" width="7" height="7" viewBox="0 0 7 7"><path class="s" d="M5 1 V4 H1.8 M3.2 2.4 L1.6 4 L3.2 5.6" fill="none" stroke="#b0b0b0" stroke-width="1"/></svg>
<svg class="a" style="left:399px;top:94px;" width="16" height="16" viewBox="0 0 16 16"><g fill="none" stroke="#acacac" stroke-width="1"><rect x="0.5" y="0.5" width="14" height="14"/><path d="M0.5 4.5 H14.5 M0.5 10.5 H14.5 M7.5 0.5 V4.5 M7.5 10.5 V14.5"/></g><path class="s" d="M3 7.5 H12 M4.5 6 L3 7.5 L4.5 9 M10.5 6 L12 7.5 L10.5 9" fill="none" stroke="#acacac" stroke-width="1"/></svg>
<svg class="a" style="left:421px;top:101px;" width="5" height="3" viewBox="0 0 5 3"><path class="s" d="M0 0 H5 L2.5 3 Z" fill="#c4c4c4"/></svg>
<svg class="a" style="left:329px;top:117px;" width="18" height="16" viewBox="0 0 18 16"><g fill="#acacac"><rect x="1" y="1" width="16" height="1"/><rect x="7" y="4.5" width="10" height="1"/><rect x="7" y="8" width="10" height="1"/><rect x="1" y="12" width="16" height="1"/></g><path class="s" d="M6 6.8 H1.5 M3.8 4.5 L1.5 6.8 L3.8 9.1" fill="none" stroke="#acacac" stroke-width="1.4"/></svg>
<svg class="a" style="left:351px;top:117px;" width="18" height="16" viewBox="0 0 18 16"><g fill="#acacac"><rect x="1" y="1" width="16" height="1"/><rect x="7" y="4.5" width="10" height="1"/><rect x="7" y="8" width="10" height="1"/><rect x="1" y="12" width="16" height="1"/></g><path class="s" d="M1 6.8 H5.5 M3.2 4.5 L5.5 6.8 L3.2 9.1" fill="none" stroke="#acacac" stroke-width="1.4"/></svg>
<div class="a" style="left:375px;top:115px;width:1px;height:21px;background:#d0d0d0;"></div>
<svg class="a" style="left:378px;top:112px;" width="24" height="24" viewBox="0 0 24 24"><text x="0" y="0" transform="translate(7.6,17.6) rotate(-45)" font-family="Liberation Sans" font-size="10.5" font-weight="bold" fill="#6b6a5b">ab</text><path class="s" d="M11.8 19.6 L20.6 10.6 M17.6 10.4 H20.8 V13.6" fill="none" stroke="#6b6a5b" stroke-width="1.3"/></svg>
<svg class="a" style="left:403px;top:124px;" width="5" height="3" viewBox="0 0 5 3"><path class="s" d="M0 0 H5 L2.5 3 Z" fill="#6b6a5b"/></svg>
<div class="a" style="left:447px;top:68px;width:78px;height:23px;background:#fff;box-sizing:border-box;border:1px solid #c6c6c6;"></div>
<div class="t" style="left:450.40px;top:70px;font-family:'Liberation Sans';font-size:12px;font-weight:normal;color:#a6a6a6;letter-spacing:0.350px;">Общий</div>
<svg class="a" style="left:515px;top:78px;" width="5" height="3" viewBox="0 0 5 3"><path class="s" d="M0 0 H5 L2.5 3 Z" fill="#b8b8b8"/></svg>
<svg class="a" style="left:449px;top:93px;" width="18" height="18" viewBox="0 0 18 18"><g fill="none" stroke="#acacac" stroke-width="1.5"><path d="M1.5 5 V1.5 H16 V5 M1.5 7 V10.5 H5"/></g><circle class="s" cx="8" cy="6" r="2.2" fill="#acacac"/><g fill="none" stroke="#c0c0c0" stroke-width="1"><ellipse class="s" cx="12" cy="10.5" rx="3" ry="1.3"/><ellipse class="s" cx="7" cy="14.5" rx="3" ry="1.3"/><path d="M12 13.5 H16 M12 15.5 H16"/></g></svg>
<svg class="a" style="left:472px;top:101px;" width="5" height="3" viewBox="0 0 5 3"><path class="s" d="M0 0 H5 L2.5 3 Z" fill="#c4c4c4"/></svg>
<div class="t" style="left:486.70px;top:93px;font-family:'Liberation Sans';font-size:15px;font-weight:normal;color:#9c9c9c;letter-spacing:0.000px;">%</div>
<div class="t" style="left:506.90px;top:91px;font-family:'Liberation Sans';font-size:9.5px;font-weight:normal;color:#9c9c9c;letter-spacing:0.000px;transform:scaleX(0.8750);transform-origin:0 0;">000</div>
<svg class="a" style="left:449px;top:117px;" width="18" height="16" viewBox="0 0 18 16"><rect class="s" x="11.6" y="1.6" width="2.8" height="4.8" rx="1.4" fill="none" stroke="#a0a0a0" stroke-width="1.2"/><rect class="s" x="6.6" y="8.6" width="2.8" height="4.8" rx="1.4" fill="none" stroke="#a0a0a0" stroke-width="1.2"/><rect class="s" x="11.6" y="8.6" width="2.8" height="4.8" rx="1.4" fill="none" stroke="#a0a0a0" stroke-width="1.2"/><path class="s" d="M1.5 4.5 H8 M4 2.2 L1.5 4.5 L4 6.8 M3.8 14.5 L5 13 M9.5 6.8 L10.8 5.2" fill="none" stroke="#a8a8a8" stroke-width="1.2"/></svg>
<svg class="a" style="left:471px;top:117px;" width="18" height="16" viewBox="0 0 18 16"><rect class="s" x="6.6" y="1.6" width="2.8" height="4.8" rx="1.4" fill="none" stroke="#a0a0a0" stroke-width="1.2"/><rect class="s" x="11.6" y="1.6" width="2.8" height="4.8" rx="1.4" fill="none" stroke="#a0a0a0" stroke-width="1.2"/><rect class="s" x="11.6" y="8.6" width="2.8" height="4.8" rx="1.4" fill="none" stroke="#a0a0a0" stroke-width="1.2"/><path class="s" d="M1 11.5 H7 M5 9.2 L7.3 11.5 L5 13.8 M2.8 7.5 L4 6 M8.3 14.5 L9.5 13" fill="none" stroke="#a8a8a8" stroke-width="1.2"/></svg>
<svg class="a" style="left:544px;top:71px;" width="17" height="18" viewBox="0 0 17 18"><rect x="0" y="0" width="10" height="10" fill="#acacac"/><g fill="none" stroke="#f3f3f3" stroke-width="1"><path d="M0 3.5 H10 M0 6.5 H10 M4.5 0 V10"/></g><rect x="6.5" y="6.5" width="9" height="9" fill="#fff" stroke="#acacac" stroke-width="1"/><path d="M8.5 10 H13.5 M8.5 12 H13.5 M12 8.5 L10 13.5" stroke="#acacac" stroke-width="1" class="s"/></svg>
<svg class="a" style="left:544px;top:93px;" width="17" height="18" viewBox="0 0 17 18"><g fill="none" stroke="#acacac" stroke-width="1"><rect x="0.5" y="0.5" width="13" height="13"/><path d="M0.5 4.5 H13.5 M0.5 8.5 H13.5 M4.5 0.5 V13.5 M9.5 0.5 V13.5"/></g><path class="s" d="M4 15 L7 12 L9 14 L6 17 Z M8 11 L14 5 L16 7 L10 13 Z" fill="#acacac" stroke="#f3f3f3" stroke-width="0.7"/></svg>
<svg class="a" style="left:544px;top:116px;" width="17" height="18" viewBox="0 0 17 18"><g fill="none" stroke="#acacac" stroke-width="1"><rect x="0.5" y="0.5" width="13" height="13"/><path d="M0.5 4.5 H13.5 M0.5 8.5 H13.5 M4.5 0.5 V13.5 M9.5 0.5 V13.5"/></g><path class="s" d="M4 15 L7 12 L9 14 L6 17 Z M8 11 L14 5 L16 7 L10 13 Z" fill="#acacac" stroke="#f3f3f3" stroke-width="0.7"/></svg>
<div class="t" style="left:563.40px;top:70px;font-family:'Liberation Sans';font-size:12px;font-weight:normal;color:#a6a6a6;letter-spacing:-0.073px;">Условное форматирование</div>
<svg class="a" style="left:718px;top:79px;" width="5" height="3" viewBox="0 0 5 3"><path class="s" d="M0 0 H5 L2.5 3 Z" fill="#c4c4c4"/></svg>
<div class="t" style="left:563.40px;top:93px;font-family:'Liberation Sans';font-size:12px;font-weight:normal;color:#a6a6a6;letter-spacing:-0.075px;">Форматировать как таблицу</div>
<svg class="a" style="left:722px;top:102px;" width="5" height="3" viewBox="0 0 5 3"><path class="s" d="M0 0 H5 L2.5 3 Z" fill="#c4c4c4"/></svg>
<div class="t" style="left:563.40px;top:116px;font-family:'Liberation Sans';font-size:12px;font-weight:normal;color:#a6a6a6;letter-spacing:0.000px;transform:scaleX(0.9657);transform-origin:0 0;">Стили ячеек</div>
<svg class="a" style="left:634px;top:125px;" width="5" height="3" viewBox="0 0 5 3"><path class="s" d="M0 0 H5 L2.5 3 Z" fill="#c4c4c4"/></svg>
<svg class="a" style="left:753px;top:71px;" width="17" height="16" viewBox="0 0 17 16"><g fill="none" stroke="#acacac" stroke-width="1"><path d="M0.5 0.5 H9.5 V4.5 H0.5 Z M5 0.5 V4.5 M0.5 10.5 H9.5 V14.5 H0.5 Z M5 10.5 V14.5 M0.5 4.5 V10.5"/><path d="M8.5 5.5 H16.5 V9.5 H8.5 Z M12.5 5.5 V9.5"/></g><rect x="9" y="6" width="3" height="3" fill="#d0d0d0"/><rect x="13" y="6" width="3" height="3" fill="#d0d0d0"/><path class="s" d="M8 7.5 H2 M4.3 5 L1.8 7.5 L4.3 10" fill="none" stroke="#acacac" stroke-width="1.6"/></svg>
<svg class="a" style="left:753px;top:94px;" width="17" height="16" viewBox="0 0 17 16"><g fill="none" stroke="#acacac" stroke-width="1"><path d="M0.5 0.5 H9.5 V4.5 H0.5 Z M5 0.5 V4.5 M0.5 10.5 H9.5 V14.5 H0.5 Z M5 10.5 V14.5"/><path d="M4.5 5.5 H10.5 V9.5 H4.5 Z"/></g><path class="s" d="M9 5 L15.5 11 M15.5 5 L9 11" fill="none" stroke="#acacac" stroke-width="1.3"/></svg>
<svg class="a" style="left:753px;top:116px;" width="17" height="17" viewBox="0 0 17 17"><path d="M1 0 V3 M15 0 V3 M1 1.5 H15" stroke="#1a78c2" stroke-width="1" fill="none"/><path class="s" d="M2 1.5 L4.5 -0.3 V3.3 Z M14 1.5 L11.5 -0.3 V3.3 Z" fill="#1a78c2"/><g fill="none" stroke="#6b6a5b" stroke-width="1"><path d="M0.5 4.5 H15.5 V14.5 H0.5 Z M0.5 8 H15.5 M0.5 11.5 H15.5 M5.5 4.5 V14.5 M10.5 4.5 V14.5"/><path d="M1.5 14.5 V16 H14.5 V14.5"/></g><rect x="3" y="7" width="6" height="5" fill="#1a78c2"/></svg>
<div class="t" style="left:772.60px;top:70px;font-family:'Liberation Sans';font-size:12px;font-weight:normal;color:#a6a6a6;letter-spacing:0.000px;transform:scaleX(0.9196);transform-origin:0 0;">Вставить</div>
<svg class="a" style="left:830px;top:78px;" width="5" height="3" viewBox="0 0 5 3"><path class="s" d="M0 0 H5 L2.5 3 Z" fill="#6b6a5b"/></svg>
<div class="t" style="left:772.60px;top:93px;font-family:'Liberation Sans';font-size:12px;font-weight:normal;color:#a6a6a6;letter-spacing:0.000px;transform:scaleX(0.9348);transform-origin:0 0;">Удалить</div>
<svg class="a" style="left:826px;top:101px;" width="5" height="3" viewBox="0 0 5 3"><path class="s" d="M0 0 H5 L2.5 3 Z" fill="#6b6a5b"/></svg>
<div class="t" style="left:772.60px;top:116px;font-family:'Liberation Sans';font-size:12px;font-weight:normal;color:#262626;letter-spacing:0.000px;transform:scaleX(0.9791);transform-origin:0 0;">Формат</div>
<svg class="a" style="left:818px;top:124px;" width="5" height="3" viewBox="0 0 5 3"><path class="s" d="M0 0 H5 L2.5 3 Z" fill="#6b6a5b"/></svg>
<svg class="a" style="left:863px;top:70px;" width="18" height="18" viewBox="0 0 18 18"><path class="s" d="M1 1 H16 V4 M2.2 1.8 L9.5 8.5 L2.2 15.2 M1 16.2 H16 V13" fill="none" stroke="#a8a8a8" stroke-width="2.2" stroke-linejoin="miter"/></svg>
<svg class="a" style="left:886px;top:78px;" width="5" height="3" viewBox="0 0 5 3"><path class="s" d="M0 0 H5 L2.5 3 Z" fill="#c4c4c4"/></svg>
<div class="t" style="left:901.00px;top:65px;font-family:'Liberation Sans';font-size:9px;font-weight:normal;color:#b4b4b4;letter-spacing:0.000px;">А</div>
<div class="t" style="left:901.00px;top:74px;font-family:'Liberation Sans';font-size:9px;font-weight:normal;color:#b4b4b4;letter-spacing:0.000px;">Я</div>
<svg class="a" style="left:907px;top:76px;" width="10" height="8" viewBox="0 0 10 8"><path class="s" d="M0.5 0.5 H9.5 L6 4 V7.5 L4 6.5 V4 Z" fill="#acacac"/></svg>
<svg class="a" style="left:919px;top:78px;" width="5" height="3" viewBox="0 0 5 3"><path class="s" d="M0 0 H5 L2.5 3 Z" fill="#c4c4c4"/></svg>
<svg class="a" style="left:864px;top:93px;" width="16" height="18" viewBox="0 0 16 18"><g fill="none" stroke="#acacac" stroke-width="1"><rect x="1.5" y="1.5" width="13" height="15"/></g><rect x="1.5" y="1.5" width="13" height="3" fill="#acacac"/><path class="s" d="M8 6 V13 M5 10 L8 13 L11 10" fill="none" stroke="#acacac" stroke-width="1.6"/></svg>
<svg class="a" style="left:884px;top:101px;" width="5" height="3" viewBox="0 0 5 3"><path class="s" d="M0 0 H5 L2.5 3 Z" fill="#c4c4c4"/></svg>
<svg class="a" style="left:899px;top:94px;" width="16" height="16" viewBox="0 0 16 16"><circle class="s" cx="9.5" cy="6" r="4" fill="none" stroke="#1a78c2" stroke-width="2"/><path class="s" d="M6.5 9 L1.5 14" stroke="#1a78c2" stroke-width="2.4" stroke-linecap="round"/></svg>
<svg class="a" style="left:919px;top:101px;" width="5" height="3" viewBox="0 0 5 3"><path class="s" d="M0 0 H5 L2.5 3 Z" fill="#6b6a5b"/></svg>
<svg class="a" style="left:864px;top:117px;" width="15" height="15" viewBox="0 0 15 15"><path class="s" d="M1.2 9.5 L9.5 1.2 L14 5.7 L5.7 14 Z" fill="#f2a446" stroke="#f9d38a" stroke-width="1"/><path class="s" d="M1.2 9.5 L3.6 7.1 L8.1 11.6 L5.7 14 Z" fill="#bdbdbd" stroke="#f9d38a" stroke-width="0.8"/><path class="s" d="M5.5 5.2 L9.8 9.5 M7.6 3.3 L11.9 7.6" stroke="#f9c070" stroke-width="0.9"/></svg>
<svg class="a" style="left:884px;top:124px;" width="5" height="3" viewBox="0 0 5 3"><path class="s" d="M0 0 H5 L2.5 3 Z" fill="#6b6a5b"/></svg>
<svg class="a" style="left:954px;top:146px;" width="10" height="7" viewBox="0 0 10 7"><path class="s" d="M1 5.5 L5 1.5 L9 5.5" fill="none" stroke="#6b6a5b" stroke-width="1.6"/></svg>
<svg class="a" style="left:22px;top:10px;" width="16" height="16" viewBox="0 0 16 16"><g fill="none" stroke="#fff" stroke-width="1.6"><rect x="1.8" y="1.8" width="12.4" height="12.4"/><path d="M1.8 7.6 H14.2"/><path d="M5 14 V10.2 H11.6 V14"/></g><rect x="7.3" y="11.8" width="1.8" height="2.4" fill="#fff"/></svg>
<svg class="a" style="left:50px;top:9px;" width="18" height="17" viewBox="0 0 18 17"><path class="s" d="M2.5 6 H9.5 A4.6 4.6 0 0 1 10.5 15" fill="none" stroke="#fff" stroke-width="1.7"/><path class="s" d="M7 1.8 L2.3 6 L7 10.2" fill="none" stroke="#fff" stroke-width="1.7"/></svg>
<svg class="a" style="left:71px;top:16px;" width="5" height="3" viewBox="0 0 5 3"><path class="s" d="M0 0 H5 L2.5 3 Z" fill="#fff"/></svg>
<svg class="a" style="left:85px;top:9px;" width="18" height="17" viewBox="0 0 18 17"><path class="s" d="M15.5 6 H8.5 A4.6 4.6 0 0 0 7.5 15" fill="none" stroke="#3fae79" stroke-width="1.7"/><path class="s" d="M11 1.8 L15.7 6 L11 10.2" fill="none" stroke="#3fae79" stroke-width="1.7"/></svg>
<svg class="a" style="left:106px;top:16px;" width="5" height="3" viewBox="0 0 5 3"><path class="s" d="M0 0 H5 L2.5 3 Z" fill="#3fae79"/></svg>
<div class="a" style="left:126px;top:15px;width:5px;height:1px;background:#fff;"></div>
<svg class="a" style="left:126px;top:18px;" width="5" height="3" viewBox="0 0 5 3"><path class="s" d="M0 0 H5 L2.5 3 Z" fill="#fff"/></svg>
<svg class="a" style="left:804px;top:10px;" width="15" height="12" viewBox="0 0 15 12"><g fill="none" stroke="#fff" stroke-width="1"><rect x="1.5" y="1.5" width="12" height="9"/><path d="M1.5 3.5 H13.5 M7.5 5 V10.5"/></g><path class="s" d="M5.5 7 L7.5 5 L9.5 7" fill="none" stroke="#fff" stroke-width="1"/></svg>
<div class="a" style="left:853px;top:16px;width:10px;height:1px;background:#fff;"></div>
<div class="a" style="left:899px;top:11px;width:10px;height:10px;box-sizing:border-box;border:1px solid #fff;"></div>
<svg class="a" style="left:944px;top:10px;" width="12" height="12" viewBox="0 0 12 12"><path class="s" d="M1 1 L11 11 M11 1 L1 11" stroke="#fff" stroke-width="1.1"/></svg>
<svg class="a" style="left:769px;top:41px;" width="16" height="18" viewBox="0 0 16 18"><g class="s" fill="none" stroke="#fff" stroke-width="1"><path d="M4.6 12.5 C4.6 10 1.8 9 1.8 6.2 A5.7 5.7 0 0 1 13.2 6.2 C13.2 9 10.4 10 10.4 12.5 Z"/><path d="M5 14.5 H10 M5.8 16.5 H9.2"/></g></svg>
<svg class="a" style="left:864px;top:40px;" width="20" height="20" viewBox="0 0 20 20"><g class="s" fill="none" stroke="#fff" stroke-width="1.1"><circle cx="8" cy="6.2" r="4.3"/><path d="M1.5 17.5 C2.5 13 5 10.7 8 10.7 C9.6 10.7 10.8 11.2 11.8 12"/><path d="M12.5 11.5 V18 M9.3 14.7 H15.8"/></g></svg>
<svg class="a" style="left:95px;top:178px;" width="6" height="4" viewBox="0 0 6 4"><path class="s" d="M0 0 H6 L3.0 4 Z" fill="#777"/></svg>
<div class="a" style="left:122px;top:176px;width:2px;height:2px;background:#9a9a9a;"></div>
<div class="a" style="left:122px;top:180px;width:2px;height:2px;background:#9a9a9a;"></div>
<div class="a" style="left:122px;top:184px;width:2px;height:2px;background:#9a9a9a;"></div>
<svg class="a" style="left:150px;top:175px;" width="14" height="12" viewBox="0 0 14 12"><path class="s" d="M2 1 L12 11 M12 1 L2 11" stroke="#b0b0b0" stroke-width="1.2"/></svg>
<svg class="a" style="left:186px;top:175px;" width="15" height="12" viewBox="0 0 15 12"><path class="s" d="M1.5 6.5 L5.5 10.5 L13.5 1.5" fill="none" stroke="#b0b0b0" stroke-width="1.7"/></svg>
<div class="t" style="left:223px;top:171px;font-family:'Liberation Serif';font-size:14px;font-style:italic;font-weight:bold;color:#5b5a4d;letter-spacing:-1px;line-height:20px">f<span style="font-size:11px">x</span></div>
<svg class="a" style="left:955px;top:177px;" width="10" height="7" viewBox="0 0 10 7"><path class="s" d="M1 1 L5 5 L9 1" fill="none" stroke="#b4b4b4" stroke-width="1.5"/></svg>
<svg class="a" style="left:11px;top:208px;" width="13" height="13" viewBox="0 0 13 13"><path class="s" d="M12 0 V12 H0 Z" fill="#b4b4b4"/></svg>
<svg class="a" style="left:959px;top:211px;" width="7" height="4" viewBox="0 0 7 4"><path class="s" d="M0 4 H7 L3.5 0 Z" fill="#6b6a5b"/></svg>
<svg class="a" style="left:959px;top:663px;" width="7" height="4" viewBox="0 0 7 4"><path class="s" d="M0 0 H7 L3.5 4 Z" fill="#6b6a5b"/></svg>
<svg class="a" style="left:606px;top:682px;" width="5" height="8" viewBox="0 0 5 8"><path class="s" d="M4.5 0 V8 L0 4 Z" fill="#6b6a5b"/></svg>
<svg class="a" style="left:942px;top:682px;" width="5" height="8" viewBox="0 0 5 8"><path class="s" d="M0 0 V8 L4.5 4 Z" fill="#6b6a5b"/></svg>
<svg class="a" style="left:28px;top:682px;" width="5" height="8" viewBox="0 0 5 8"><path class="s" d="M4.5 0 V8 L0 4 Z" fill="#c0c0c0"/></svg>
<svg class="a" style="left:57px;top:682px;" width="5" height="8" viewBox="0 0 5 8"><path class="s" d="M0 0 V8 L4.5 4 Z" fill="#c0c0c0"/></svg>
<svg class="a" style="left:240px;top:677px;" width="18" height="18" viewBox="0 0 18 18"><circle class="s" cx="8.9" cy="8.9" r="7.6" fill="none" stroke="#6b6a5b" stroke-width="1.2"/><path d="M9 4.5 V13.5 M4.5 9 H13.5" stroke="#6b6a5b" stroke-width="1.8"/></svg>
<div class="a" style="left:584px;top:681px;width:2px;height:2px;background:#b0b0b0;"></div>
<div class="a" style="left:584px;top:685px;width:2px;height:2px;background:#b0b0b0;"></div>
<div class="a" style="left:584px;top:689px;width:2px;height:2px;background:#b0b0b0;"></div>
<svg class="a" style="left:685px;top:704px;" width="13" height="13" viewBox="0 0 13 13"><g fill="none" stroke="#6b6a5b" stroke-width="1"><rect x="0.5" y="0.5" width="12" height="12"/><path d="M4.5 0.5 V12.5 M8.5 0.5 V12.5 M0.5 4.5 H12.5 M0.5 8.5 H12.5"/></g></svg>
<svg class="a" style="left:723px;top:704px;" width="15" height="13" viewBox="0 0 15 13"><g fill="none" stroke="#6b6a5b" stroke-width="1"><rect x="0.5" y="0.5" width="13" height="12"/><rect x="3.5" y="2.5" width="7" height="8"/><path d="M5 5 H9 M5 7 H9"/></g></svg>
<svg class="a" style="left:760px;top:704px;" width="15" height="13" viewBox="0 0 15 13"><g fill="none" stroke="#6b6a5b" stroke-width="1"><path d="M0.5 0.5 H13.5 V12.5 H0.5 Z M0.5 8.5 H9.5 V0.5 M4.5 0.5 V5.5"/></g></svg>
<div class="a" style="left:792px;top:710px;width:6px;height:2px;background:#6b6a5b;"></div>
<div class="a" style="left:802px;top:710px;width:100px;height:1px;background:#b4b4b4;"></div>
<div class="a" style="left:850px;top:705px;width:6px;height:11px;background:#6b6a5b;"></div>
<div class="a" style="left:905px;top:710px;width:8px;height:2px;background:#6b6a5b;"></div>
<div class="a" style="left:908px;top:707px;width:2px;height:8px;background:#6b6a5b;"></div>
<svg class="a" style="left:92px;top:145px;" width="9" height="9" viewBox="0 0 9 9"><path d="M1.5 7 V1.5 H7" fill="none" stroke="#6b6a5b" stroke-width="1.2"/><path class="s" d="M4 8 H8 V4 Z M4.2 4.2 L7.5 7.5" fill="#6b6a5b" stroke="#6b6a5b" stroke-width="1"/></svg>
<svg class="a" style="left:306px;top:145px;" width="9" height="9" viewBox="0 0 9 9"><path d="M1.5 7 V1.5 H7" fill="none" stroke="#c4c4c4" stroke-width="1.2"/><path class="s" d="M4 8 H8 V4 Z M4.2 4.2 L7.5 7.5" fill="#c4c4c4" stroke="#c4c4c4" stroke-width="1"/></svg>
<svg class="a" style="left:426px;top:145px;" width="9" height="9" viewBox="0 0 9 9"><path d="M1.5 7 V1.5 H7" fill="none" stroke="#c4c4c4" stroke-width="1.2"/><path class="s" d="M4 8 H8 V4 Z M4.2 4.2 L7.5 7.5" fill="#c4c4c4" stroke="#c4c4c4" stroke-width="1"/></svg>
<svg class="a" style="left:520px;top:145px;" width="9" height="9" viewBox="0 0 9 9"><path d="M1.5 7 V1.5 H7" fill="none" stroke="#c4c4c4" stroke-width="1.2"/><path class="s" d="M4 8 H8 V4 Z M4.2 4.2 L7.5 7.5" fill="#c4c4c4" stroke="#c4c4c4" stroke-width="1"/></svg>
</body></html>
